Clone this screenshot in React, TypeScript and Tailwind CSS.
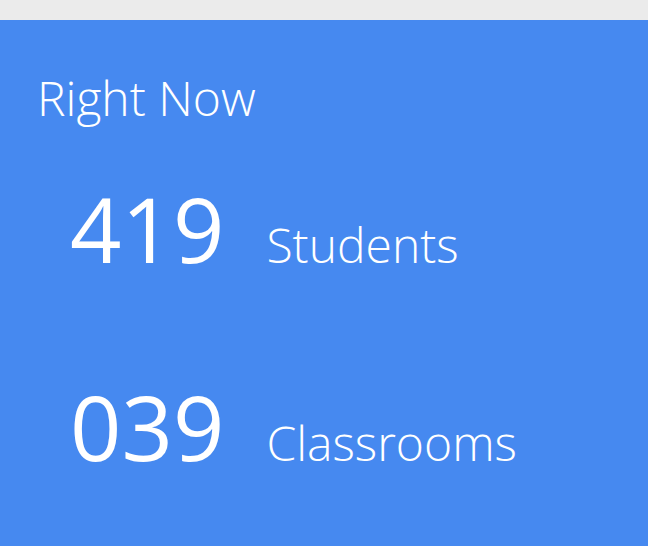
const stats = [
  { value: "419", label: "Students" },
  { value: "039", label: "Classrooms" },
]

export default function App() {
  return (
    <div className="flex h-[546px] w-[648px] flex-col font-['Open_Sans',sans-serif] text-white">
      <div className="h-[20px] shrink-0 bg-[#ebebeb]" />
      <div className="flex flex-1 flex-col bg-[#4689f0] pl-[37px] pt-[54px]">
        <h1 className="text-[48px] font-light leading-none">Right Now</h1>
        <div className="mt-[61px] flex flex-col gap-[108px] pl-[33px]">
          {stats.map((s) => (
            <div key={s.label} className="flex items-baseline gap-[42px]">
              <span className="text-[90px] leading-none">{s.value}</span>
              <span className="text-[48px] font-light leading-none">{s.label}</span>
            </div>
          ))}
        </div>
      </div>
    </div>
  )
}
